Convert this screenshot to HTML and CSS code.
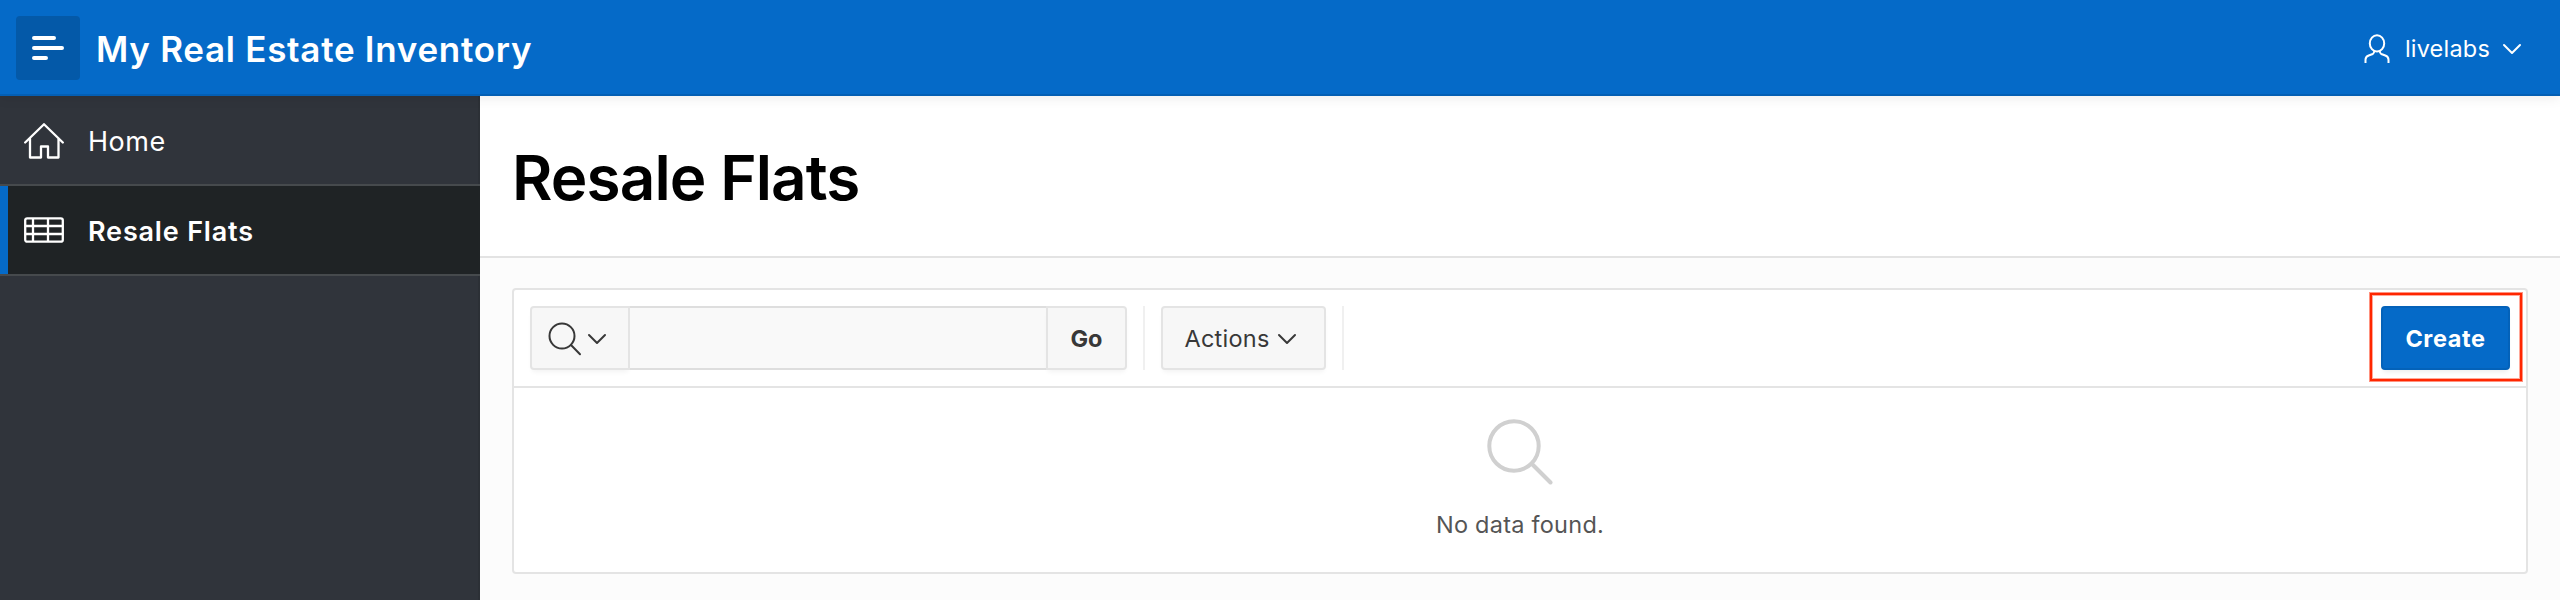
FILE: index.html
```html
<!DOCTYPE html>
<html lang="en">
<head>
<meta charset="utf-8">
<title>Resale Flats</title>
<link rel="stylesheet" href="styles.css">
</head>
<body>
<header class="header">
  <button class="menu-toggle" aria-label="Navigation">
    <svg width="32" height="24" viewBox="0 0 32 24" fill="none" stroke="#fff" stroke-width="4" stroke-linecap="round"><path d="M2 2h20M2 12h28M2 22h12"/></svg>
  </button>
  <span class="app-name">My Real Estate Inventory</span>
  <div class="user">
    <svg class="user-icon" width="26" height="30" viewBox="0 0 26 30" fill="none" stroke="#fff" stroke-width="2"><ellipse cx="13" cy="9.4" rx="7.2" ry="8.2"/><path d="M1.500 29v-3.200c0-2 1.200-3.600 3.200-4.300l4-1.500c1-.5 1.500-1.400 1.600-3M24.500 29v-3.200c0-2-1.200-3.600-3.200-4.300l-4-1.500c-1-.5-1.500-1.400-1.600-3"/></svg>
    <span class="user-name">livelabs</span>
    <svg class="chevron" width="20" height="12" viewBox="0 0 20 12" fill="none" stroke="#fff" stroke-width="2" stroke-linecap="round" stroke-linejoin="round"><path d="M2 2l8 8 8-8"/></svg>
  </div>
</header>
<div class="body">
  <nav class="nav">
    <a class="nav-item">
      <svg class="home-icon" width="40" height="36" viewBox="0 0 40 36" fill="none" stroke="#fff" stroke-width="2.300" stroke-linecap="round" stroke-linejoin="round"><path d="M1.200 19.500L20 1.200l18.800 18.300M6 15.500V34.500H17V23.500h7V34.500H34.500V15.500"/></svg>
      <span class="nav-label">Home</span>
    </a>
    <a class="nav-item nav-current">
      <svg width="40" height="26" viewBox="0 0 40 26" fill="none" stroke="#fff" stroke-width="2.300"><rect x="1.200" y="1.300" width="37.600" height="23.400" rx="2"/><path d="M1 9h38M1 17h38M9 1v24M24 1v24"/></svg>
      <span class="nav-label">Resale Flats</span>
    </a>
  </nav>
  <main class="main">
    <div class="title-bar"><h1 class="title">Resale Flats</h1></div>
    <section class="report">
      <div class="toolbar">
        <div class="search">
          <button class="btn search-column" aria-label="Select columns to search">
            <svg width="34" height="34" viewBox="0 0 34 34" fill="none" stroke="#383838" stroke-width="2" stroke-linecap="round"><circle cx="14" cy="14" r="12.500"/><path d="M23 23l9 9.300"/></svg>
            <svg width="20" height="12" viewBox="0 0 20 12" fill="none" stroke="#383838" stroke-width="2" stroke-linecap="round" stroke-linejoin="round"><path d="M2 2l8 8 8-8"/></svg>
          </button>
          <input class="search-field" type="text" aria-label="Search">
          <button class="btn go">Go</button>
        </div>
        <span class="divider"></span>
        <button class="btn actions"><span>Actions</span>
          <svg width="20" height="12" viewBox="0 0 20 12" fill="none" stroke="#383838" stroke-width="2" stroke-linecap="round" stroke-linejoin="round"><path d="M2 2l8 8 8-8"/></svg>
        </button>
        <span class="divider"></span>
        <div class="create-wrap"><button class="create">Create</button><span class="highlight"></span></div>
      </div>
      <div class="empty">
        <svg width="66" height="66" viewBox="0 0 66 66" fill="none" stroke="#d0d0d0" stroke-width="4" stroke-linecap="round"><circle cx="27" cy="27" r="24.700"/><path d="M46 46l17.500 17.500"/></svg>
        <span class="empty-text">No data found.</span>
      </div>
    </section>
  </main>
</div>
</body>
</html>
```
FILE: styles.css
```css
* { box-sizing: border-box; }
body {
  margin: 0;
  height: 600px;
  display: flex;
  flex-direction: column;
  overflow: hidden;
  background: #fcfcfc;
  color: #383838;
  font: 400 23.500px/32px Inter, "Liberation Sans", sans-serif;
  white-space: nowrap;
}
button { font: inherit; margin: 0; padding: 0; color: inherit; letter-spacing: inherit; }
svg { display: block; flex: none; }

.header {
  position: relative;
  z-index: 1;
  flex: none;
  height: 96px;
  display: flex;
  align-items: center;
  padding: 0 38px 0 16px;
  background: #056ac8;
  border-bottom: 2px solid #045fb4;
  box-shadow: 0 2px 12px rgba(0, 0, 0, .08);
  color: #fff;
}
.menu-toggle {
  width: 64px;
  height: 64px;
  margin-top: 2px;
  display: grid;
  place-items: center;
  border: 0;
  border-radius: 4px;
  background: #0459a8;
}
.app-name { margin: 4px 0 0 16px; font-size: 35px; font-weight: 600; line-height: 40px; letter-spacing: .72px; }
.user { display: flex; align-items: center; margin-left: auto; margin-top: 4px; }
.user-name { margin: 0 12px 0 15px; letter-spacing: .2px; }

.body { flex: 1; display: flex; min-height: 0; }
.nav {
  width: 480px;
  flex: none;
  background: #30343b;
  box-shadow: inset -2px 0 0 #2c3036;
}
.nav-item {
  display: flex;
  align-items: center;
  gap: 24px;
  height: 90px;
  padding-left: 24px;
  border-bottom: 2px solid #464a4d;
  color: #fff;
  font-size: 27px;
  letter-spacing: .5px;
}
.home-icon { margin-top: 1px; }
.nav-label { margin-top: 3px; }
.nav-current { background: #1f2325; font-weight: 600; letter-spacing: .82px; box-shadow: inset 8px 0 0 #056ac8; }

.main { flex: 1; display: flex; flex-direction: column; }
.title-bar {
  height: 162px;
  display: flex;
  align-items: center;
  padding: 4px 0 0 32px;
  background: #fff;
  border-bottom: 2px solid #e3e3e3;
}
.title { margin: 0; color: #000; font-size: 62px; line-height: 80px; font-weight: 600; letter-spacing: -.9px; }

.report {
  margin: 30px 32px 0;
  height: 286px;
  background: #fff;
  border: 2px solid #e4e4e4;
  border-radius: 4px;
}
.toolbar {
  display: flex;
  align-items: center;
  gap: 16px;
  height: 98px;
  padding: 0 16px;
  border-bottom: 2px solid #e4e4e4;
}
.search { display: flex; }
.btn {
  display: flex;
  align-items: center;
  justify-content: center;
  height: 64px;
  padding-top: 2px;
  background: #f7f7f7;
  border: 2px solid #e4e4e4;
  border-radius: 4px;
  box-shadow: 0 4px 5px -2px rgba(0, 0, 0, .05);
}
.search-column { width: 100px; gap: 5px; padding-right: 6px; border-radius: 4px 0 0 4px; }
.search-field {
  width: 416px;
  height: 64px;
  margin: 0;
  border: solid #dedede;
  border-width: 2px 0;
  border-radius: 0;
  background: #f9f9f9;
}
.go { width: 81px; border-radius: 0 4px 4px 0; font-weight: 700; }
.divider { width: 2px; height: 64px; background: #f0f0f0; }
.actions { width: 165px; gap: 7px; padding-right: 6px; letter-spacing: .25px; }
.create-wrap { position: relative; margin-left: auto; }
.create {
  display: block;
  width: 129px;
  height: 64px;
  padding-top: 2px;
  border: 2px solid #0462b9;
  border-radius: 4px;
  background: #056ac8;
  box-shadow: 0 4px 5px -2px rgba(0, 0, 0, .08);
  color: #fff;
  font-weight: 700;
  letter-spacing: .6px;
}
.highlight {
  position: absolute;
  inset: -13px -12px -11px -11px;
  border: 2px solid #ff2600;
  box-shadow: 0 0 0 1px rgba(255, 38, 0, .5), inset 0 0 0 1px rgba(255, 38, 0, .4);
  pointer-events: none;
}

.empty { display: flex; flex-direction: column; align-items: center; padding-top: 31px; }
.empty-text { margin-top: 24px; color: #555; letter-spacing: .25px; }
```
